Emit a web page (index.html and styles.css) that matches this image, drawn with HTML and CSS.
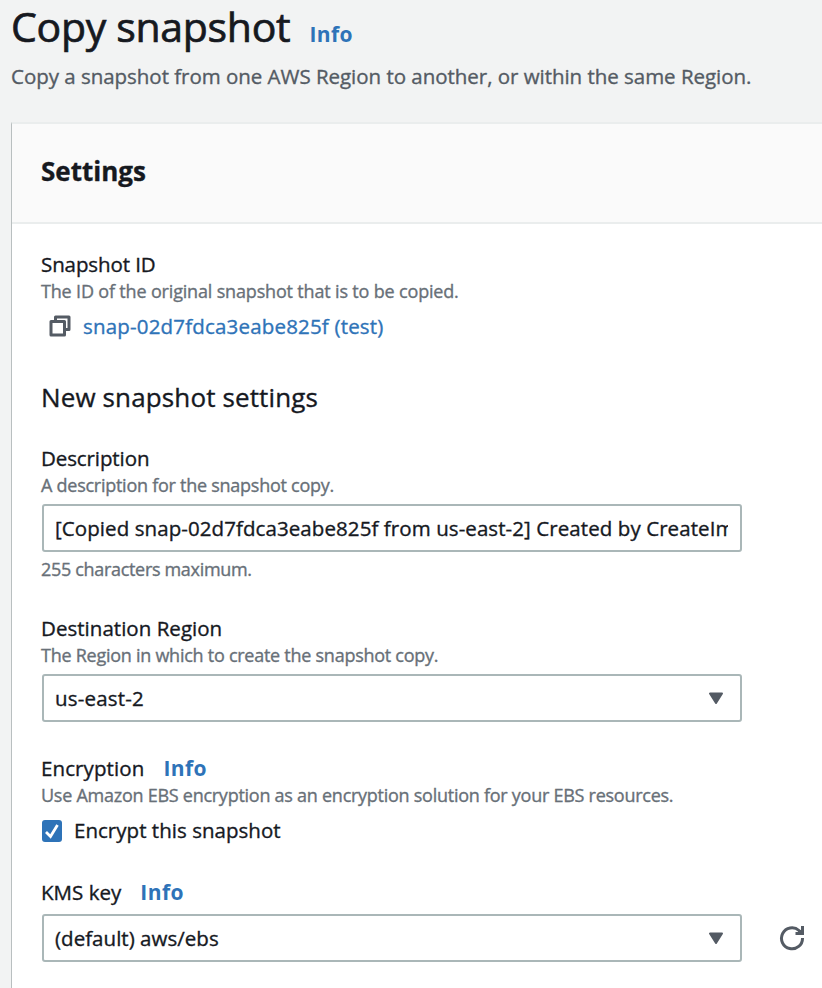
FILE: index.html
```html
<!DOCTYPE html>
<html lang="en">
<head>
<meta charset="utf-8">
<title>Copy snapshot</title>
<link rel="stylesheet" href="styles.css">
</head>
<body>
<header class="page-header">
  <div class="title-row"><h1 class="title">Copy snapshot</h1><a class="info">Info</a></div>
  <p class="subtitle">Copy a snapshot from one AWS Region to another, or within the same Region.</p>
</header>
<main class="card">
  <div class="card-header"><h2 class="card-title">Settings</h2></div>
  <div class="card-body">
    <section class="field">
      <div class="label"><span class="label-id">Snapshot ID</span></div>
      <div class="hint hint-id">The ID of the original snapshot that is to be copied.</div>
      <div class="copy-row">
        <svg class="copy-icon" width="22" height="22" viewBox="0 0 22 22" fill="none" stroke="#545b64" stroke-width="3" stroke-linejoin="round"><path d="M2 6.500h13.500v13.500h-13.500z"/><path d="M6.500 6V2h13.500v12.500h-4"/></svg>
        <a class="link">snap-02d7fdca3eabe825f (test)</a>
      </div>
    </section>
    <h3 class="subheading">New snapshot settings</h3>
    <section class="field">
      <div class="label"><span class="label-desc">Description</span></div>
      <div class="hint hint-desc">A description for the snapshot copy.</div>
      <div class="control"><span class="value value-desc">[Copied snap-02d7fdca3eabe825f from us-east-2] Created by CreateIm</span></div>
      <div class="hint hint-max">255 characters maximum.</div>
    </section>
    <section class="field">
      <div class="label"><span class="label-dest">Destination Region</span></div>
      <div class="hint hint-dest">The Region in which to create the snapshot copy.</div>
      <div class="control"><span class="value value-region">us-east-2</span>
        <svg class="caret" width="16" height="13" viewBox="0 0 16 13"><path d="M2 1.500h12L8 11z" fill="#545b64" stroke="#545b64" stroke-width="2" stroke-linejoin="round"/></svg></div>
    </section>
    <section class="field">
      <div class="label"><span class="label-enc">Encryption</span><a class="info">Info</a></div>
      <div class="hint hint-enc">Use Amazon EBS encryption as an encryption solution for your EBS resources.</div>
      <div class="check-row">
        <svg class="checkbox" width="20" height="22" viewBox="0 0 20 22"><rect width="20" height="22" rx="3" fill="#2e73b8"/><path d="M4 12l4.500 4.500L15.500 5" fill="none" stroke="#fff" stroke-width="2.800"/></svg>
        <span class="check-label">Encrypt this snapshot</span>
      </div>
    </section>
    <section class="field">
      <div class="label"><span class="label-kms">KMS key</span><a class="info">Info</a></div>
      <div class="key-row">
        <div class="control"><span class="value value-kms">(default) aws/ebs</span>
          <svg class="caret" width="16" height="13" viewBox="0 0 16 13"><path d="M2 1.500h12L8 11z" fill="#545b64" stroke="#545b64" stroke-width="2" stroke-linejoin="round"/></svg></div>
        <svg class="refresh" width="26" height="26" viewBox="0 0 26 26" fill="none" stroke="#545b64" stroke-width="3"><path d="M23.500 13A10.500 10.500 0 1 1 20 5.500L22 8"/><path d="M23.500 1v7.500H16.500"/><path d="M19 5l4 0v3.500h-3z" fill="#545b64" stroke="none"/></svg>
      </div>
    </section>
  </div>
</main>
</body>
</html>
```
FILE: styles.css
```css
* { box-sizing: border-box; }
body {
  margin: 0;
  height: 988px;
  overflow: hidden;
  background: #f2f3f3;
  color: #16191f;
  font-family: "Open Sans", "Noto Sans", sans-serif;
  font-size: 20.5px;
  font-weight: 500;
  font-stretch: 90%;
  line-height: 29px;
  letter-spacing: 0.03px;
  white-space: nowrap;
  -webkit-text-stroke: 0.35px currentColor;
}
h1, h2, h3, p { margin: 0; font-weight: 500; }
.page-header { height: 122px; padding-left: 11px; }
.title-row { display: flex; align-items: baseline; gap: 19px; height: 52px; }
.title { font-size: 41px; line-height: 52px; letter-spacing: -0.3px; -webkit-text-stroke-width: 0.7px; }
.info { color: #2e73b8; font-size: 21px; font-weight: 700; letter-spacing: 0.4px; -webkit-text-stroke-width: 0; }
.subtitle { margin-top: 10px; color: #545b64; letter-spacing: -0.03px; }
.card { height: 880px; margin-left: 11px; background: #fff; border-left: 1px solid #b9bfc0; border-top: 2px solid #eaeded; }
.card-header { height: 100px; padding: 29px 29px 0; background: #fafafa; border-bottom: 2px solid #eaeded; }
.card-title { font-size: 26px; line-height: 36px; font-weight: 700; letter-spacing: 0; }
.card-body { padding: 26px 29px 0; }
.field { margin-bottom: 32px; }
.label { display: flex; align-items: baseline; gap: 19px; height: 28px; }
.hint { color: #687078; font-size: 18px; line-height: 26px; letter-spacing: -0.26px; }
.copy-row { display: flex; align-items: center; gap: 12px; height: 28px; margin: 8px 0 39px 8px; }
.link { color: #2e73b8; letter-spacing: 0.18px; }
.subheading { margin-bottom: 29px; font-size: 26px; line-height: 36px; letter-spacing: 0.13px; }
.control { display: flex; align-items: center; justify-content: space-between; width: 700px; height: 48px; margin: 6px 0 4px 1px; padding: 0 16px 0 11px; border: 2px solid #aab7b8; border-radius: 3px; background: #fff; }
.value { overflow: hidden; }
.control > .value-desc { width: 673px; flex: none; letter-spacing: 0.08px; }
.label-id, .label-desc { letter-spacing: -0.1px; }
.label-enc { letter-spacing: 0.1px; }
.value-region { letter-spacing: 0.2px; }
.hint-id { letter-spacing: -0.17px; }
.hint-max { letter-spacing: -0.32px; }
.check-row { display: flex; align-items: center; gap: 12px; height: 28px; margin: 9px 0 33px 1px; }
.check-label { line-height: 28px; padding-bottom: 2px; }
.key-row { display: flex; align-items: center; gap: 37px; margin-top: 8px; }
.key-row .control { margin-top: 0; margin-bottom: 0; flex: none; }
.refresh { flex: none; }
```
